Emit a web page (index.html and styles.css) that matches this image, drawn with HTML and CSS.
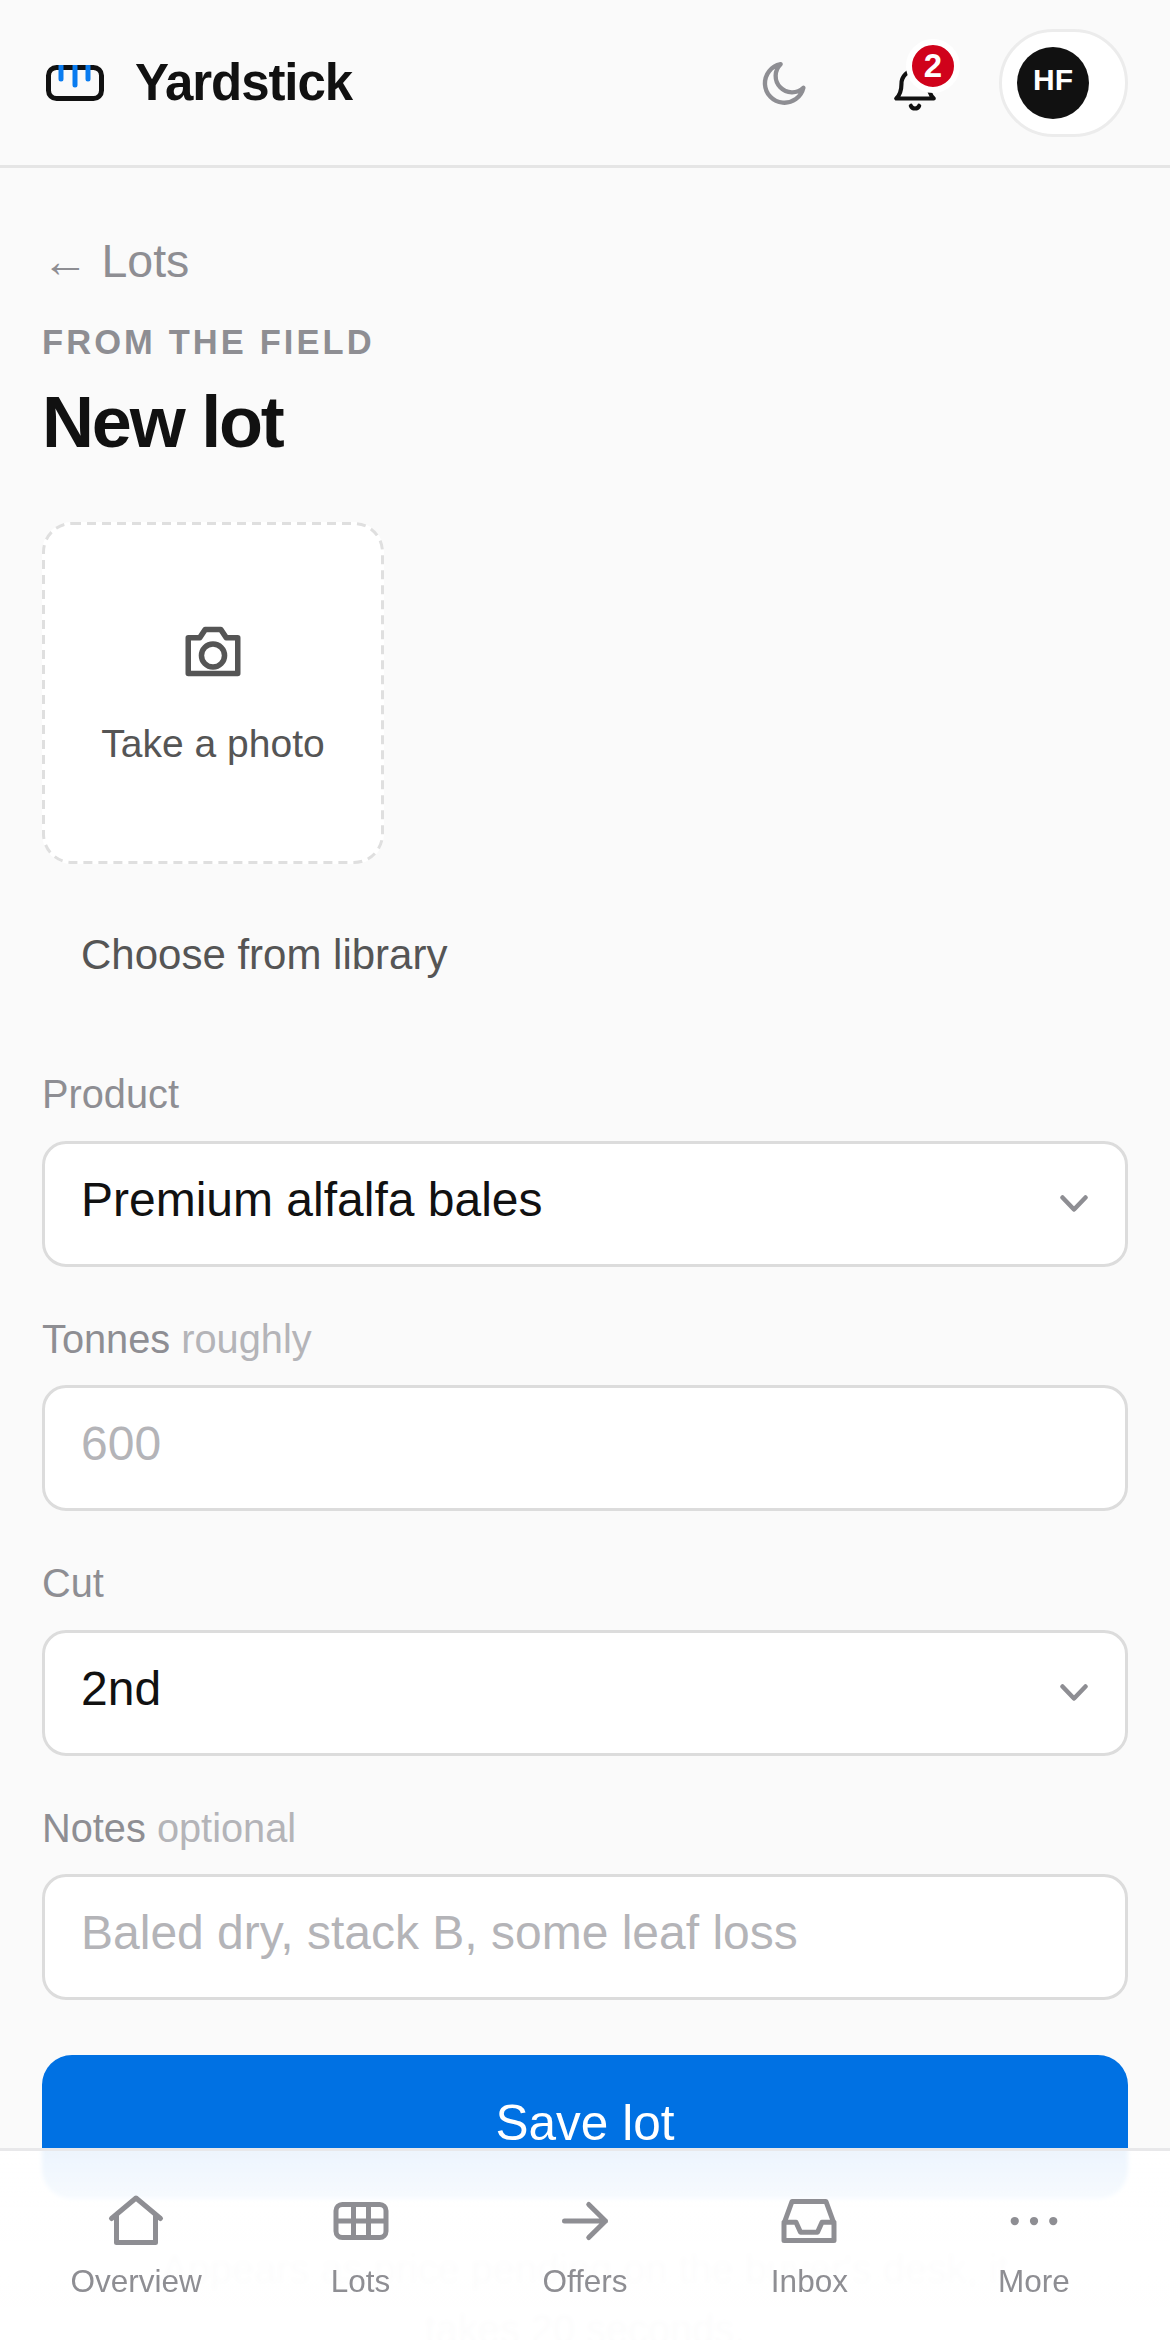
FILE: index.html
```html
<!DOCTYPE html>
<html lang="en">
<head>
    <meta charset="UTF-8">
    <meta name="viewport" content="width=device-width, initial-scale=1.0">
    <title>New lot - Yardstick</title>
    <link rel="stylesheet" href="styles.css">
</head>
<body>
    <header class="topbar">
        <a class="brand" href="#">
            <svg class="brand-icon" viewBox="0 0 58 36" fill="none" stroke-linecap="round">
                <rect x="2.5" y="2.5" width="53" height="31" rx="8" stroke="#111" stroke-width="5"/>
                <path d="M15 1v13M29 1v19M42 1v13" stroke="#0a7cf0" stroke-width="5"/>
            </svg>
            <span>Yardstick</span>
        </a>
        <div class="topbar-actions">
            <button class="icon-btn" type="button" aria-label="Dark mode">
                <svg class="moon" viewBox="0 0 24 24" fill="none" stroke="#8e8e93" stroke-width="2" stroke-linejoin="round">
                    <path d="M20.5 14.2A9 9 0 1 1 10 3.3a7 7 0 0 0 10.500 10.900z"/>
                </svg>
            </button>
            <button class="icon-btn bell-btn" type="button" aria-label="Notifications">
                <svg class="bell" viewBox="0 0 24 24" fill="none" stroke="#111" stroke-width="2" stroke-linecap="round" stroke-linejoin="round">
                    <path d="M3 18h18c-1.500-1.500-2.500-3-2.500-7a6.500 6.500 0 0 0-13 0c0 4-1 5.500-2.500 7z"/>
                    <path d="M10 21.500a2.200 2.200 0 0 0 4 0"/>
                </svg>
                <span class="badge">2</span>
            </button>
            <button class="avatar-pill" type="button">
                <span class="avatar">HF</span>
            </button>
        </div>
    </header>

    <main class="page">
        <a class="back" href="#"><span class="back-arrow">←</span> Lots</a>
        <div class="eyebrow">FROM THE FIELD</div>
        <h1>New lot</h1>

        <button class="photo-tile" type="button">
            <svg class="tile-dash" viewBox="0 0 342 342" fill="none">
                <rect x="1.500" y="1.500" width="339" height="339" rx="28.500" stroke="#dfdfdf" stroke-width="3" stroke-dasharray="9 6"/>
            </svg>
            <svg class="camera" viewBox="0 0 24 24" fill="none" stroke="#555" stroke-width="2" stroke-linejoin="round">
                <path d="M3 7.500h4.200l2-3h5.600l2 3H21v13H3z"/>
                <circle cx="12" cy="14" r="4.200"/>
            </svg>
            <span>Take a photo</span>
        </button>
        <button class="library" type="button">Choose from library</button>

        <form class="lot-form">
            <div class="field">
                <label for="product">Product</label>
                <div class="select-wrap">
                    <select id="product">
                        <option>Premium alfalfa bales</option>
                    </select>
                    <svg class="chevron" viewBox="0 0 28 18" fill="none" stroke="#8e8e93" stroke-width="4.500" stroke-linecap="round" stroke-linejoin="round">
                        <path d="M2.500 2.500L14 14.500 25.500 2.500"/>
                    </svg>
                </div>
            </div>
            <div class="field">
                <label for="tonnes">Tonnes <span class="hint">roughly</span></label>
                <input id="tonnes" type="text" placeholder="600">
            </div>
            <div class="field">
                <label for="cut">Cut</label>
                <div class="select-wrap">
                    <select id="cut">
                        <option>2nd</option>
                    </select>
                    <svg class="chevron" viewBox="0 0 28 18" fill="none" stroke="#8e8e93" stroke-width="4.500" stroke-linecap="round" stroke-linejoin="round">
                        <path d="M2.500 2.500L14 14.500 25.500 2.500"/>
                    </svg>
                </div>
            </div>
            <div class="field">
                <label for="notes">Notes <span class="hint">optional</span></label>
                <input id="notes" type="text" placeholder="Baled dry, stack B, some leaf loss">
            </div>
            <button class="save" type="submit">Save lot</button>
            <p class="footnote">Appears as price pending on the buyer's desk, it<br>takes 20 seconds.</p>
        </form>
    </main>

    <nav class="tabbar">
        <a href="#">
            <svg viewBox="0 0 24 24" fill="none" stroke="#8e8e93" stroke-width="2" stroke-linecap="round" stroke-linejoin="round">
                <path d="M2.200 11L12 2.800l9.800 8.200M4.200 10v10.600h15.600V10"/>
            </svg>
            <span>Overview</span>
        </a>
        <a href="#">
            <svg viewBox="0 0 24 24" fill="none" stroke="#8e8e93" stroke-width="2" stroke-linejoin="round">
                <rect x="2" y="5.400" width="20" height="13.200" rx="2.500"/>
                <path d="M2 12h20M9 5.400v13.200M15 5.400v13.200"/>
            </svg>
            <span>Lots</span>
        </a>
        <a href="#">
            <svg viewBox="0 0 24 24" fill="none" stroke="#8e8e93" stroke-width="2" stroke-linecap="round" stroke-linejoin="round">
                <path d="M3.800 12h16.400M13.500 5.400l6.700 6.600-6.700 6.600"/>
            </svg>
            <span>Offers</span>
        </a>
        <a href="#">
            <svg viewBox="0 0 24 24" fill="none" stroke="#8e8e93" stroke-width="2" stroke-linecap="round" stroke-linejoin="round">
                <path d="M5.200 4.200h13.600L22 13v6.800H2V13zM2 12.500h4.800l1.800 4h6.800l1.800-4H22"/>
            </svg>
            <span>Inbox</span>
        </a>
        <a href="#">
            <svg viewBox="0 0 24 24" fill="#8e8e93">
                <circle cx="4.300" cy="12" r="1.650"/>
                <circle cx="12" cy="12" r="1.650"/>
                <circle cx="19.700" cy="12" r="1.650"/>
            </svg>
            <span>More</span>
        </a>
    </nav>
</body>
</html>
```

FILE: styles.css
```css
* {
    box-sizing: border-box;
}

html, body {
    height: 100%;
    overflow: hidden;
}

body {
    margin: 0;
    background: #fafafa;
    color: #111;
    font-family: "Liberation Sans", Arial, sans-serif;
}

a {
    color: inherit;
    text-decoration: none;
}

button {
    font-family: inherit;
    border: none;
    background: none;
    padding: 0;
}

.topbar {
    height: 168px;
    border-bottom: 3px solid #e5e5e5;
    padding: 0 42px 0 46px;
    display: flex;
    justify-content: space-between;
    align-items: center;
}

.brand {
    display: flex;
    align-items: center;
    gap: 31px;
    font-size: 51px;
    font-weight: 700;
    letter-spacing: -1.100px;
}

.brand-icon {
    width: 58px;
    height: 36px;
}

.topbar-actions {
    display: flex;
    align-items: center;
}

.icon-btn {
    width: 60px;
    height: 60px;
    display: flex;
    align-items: center;
    justify-content: center;
}

.moon {
    width: 52px;
    height: 52px;
}

.bell-btn {
    position: relative;
    margin-left: 70px;
    margin-right: 54px;
}

.bell {
    width: 50px;
    height: 50px;
    margin-top: 6px;
}

.badge {
    position: absolute;
    top: -14px;
    right: -15px;
    width: 54px;
    height: 54px;
    border: 6px solid #fff;
    border-radius: 50%;
    background: #d0021b;
    color: #fff;
    font-size: 33px;
    font-weight: 700;
    line-height: 42px;
    text-align: center;
}

.avatar-pill {
    width: 129px;
    height: 108px;
    border: 3px solid #ececec;
    border-radius: 54px;
    background: #fff;
    padding-left: 15px;
    display: flex;
    align-items: center;
}

.avatar {
    width: 72px;
    height: 72px;
    border-radius: 50%;
    background: #111;
    color: #fff;
    font-size: 30px;
    font-weight: 700;
    line-height: 66px;
    text-align: center;
}

.page {
    padding: 63px 42px 0;
}

.back {
    display: block;
    font-size: 46.500px;
    line-height: 60px;
    color: #8e8e93;
}

.eyebrow {
    margin-top: 30px;
    font-size: 34.500px;
    line-height: 42px;
    font-weight: 700;
    letter-spacing: 3.100px;
    color: #8e8e93;
}

h1 {
    margin: 17px 0 0;
    font-size: 72px;
    line-height: 84px;
    letter-spacing: -2.200px;
    font-weight: 700;
}

.photo-tile {
    position: relative;
    margin-top: 58px;
    width: 342px;
    height: 342px;
    border-radius: 30px;
    background: #fff;
    color: #555;
    font-size: 39px;
    padding-bottom: 3px;
    display: flex;
    flex-direction: column;
    align-items: center;
    justify-content: center;
    gap: 39px;
}

.tile-dash {
    position: absolute;
    inset: 0;
    width: 100%;
    height: 100%;
}

.camera {
    width: 66px;
    height: 66px;
}

.library {
    display: block;
    margin-top: 31px;
    padding: 0 39px;
    height: 120px;
    font-size: 42px;
    color: #555;
}

.lot-form {
    margin-top: 49px;
    display: flex;
    flex-direction: column;
    gap: 41.750px;
}

.field label {
    display: block;
    margin-bottom: 16.750px;
    font-size: 39.750px;
    line-height: 60px;
    color: #8e8e93;
}

.hint {
    color: #b4b4b8;
}

.select-wrap {
    position: relative;
}

select, input {
    display: block;
    width: 100%;
    height: 126px;
    padding: 0 36px 9px;
    border: 3px solid #dcdcdc;
    border-radius: 24px;
    background: #fff;
    color: #111;
    font-family: inherit;
    font-size: 48px;
    appearance: none;
    outline: none;
}

input::placeholder {
    color: #b4b4b8;
    opacity: 1;
}

.chevron {
    position: absolute;
    top: 54px;
    right: 40px;
    width: 28px;
    height: 18px;
}

.save {
    height: 144px;
    margin-top: 12.750px;
    padding-bottom: 9px;
    border-radius: 30px;
    background: #0071e3;
    color: #fff;
    font-size: 49.500px;
}

.footnote {
    margin: -1.750px 0 0;
    font-size: 39.750px;
    line-height: 60px;
    text-align: center;
    color: #8e8e93;
}

.tabbar {
    position: fixed;
    left: 0;
    right: 0;
    bottom: 0;
    height: 192px;
    border-top: 3px solid #e8e8ea;
    padding: 40px 24px 0;
    background: linear-gradient(rgba(255, 255, 255, 0.93), rgba(255, 255, 255, 0.975) 30%, rgba(255, 255, 255, 0.97));
    backdrop-filter: blur(2px);
    display: grid;
    grid-template-columns: repeat(5, 1fr);
}

.tabbar a {
    display: flex;
    flex-direction: column;
    align-items: center;
    gap: 12px;
    color: #8e8e93;
    font-size: 31.500px;
}

.tabbar svg {
    width: 60px;
    height: 60px;
}
```
